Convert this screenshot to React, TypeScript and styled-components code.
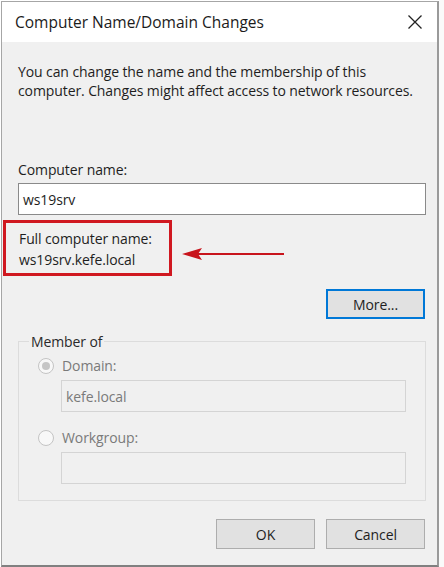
import React from 'react'
import styled, { createGlobalStyle } from 'styled-components';

const Global = createGlobalStyle`
body{
  margin:0;
  background:#ffffff;
  font-family: "Open Sans", "Noto Sans", sans-serif;
}
`;

const Screen = styled.div`
display:flex;
width:444px;
height:567px;
overflow:hidden;
`;

const Dialog = styled.div`
width:438px;
height:566px;
margin-left:1px;
margin-top:1px;
border:1px solid #a6a6a6;
border-bottom:2px solid #808080;
border-right:2px solid #9a9a9a;
background:#f0f0f0;
display:flex;
flex-direction:column;
box-sizing:border-box;
`;

const Behind = styled.div`
flex:1;
background:#fafafa;
`;

const TitleBar = styled.div`
height:40px;
background:#ffffff;
display:flex;
align-items:center;
justify-content:space-between;
padding:0 14px 0 13px;
`;

const Title = styled.span`
font-size:15.5px;
color:#1b1b1b;
letter-spacing:0px;
`;

const Body = styled.div`
padding:0 11px 0 16px;
display:flex;
flex-direction:column;
`;

const Text = styled.p<{ $gray?: boolean }>`
margin:0;
font-size:14px;
line-height:19px;
letter-spacing:-0.1px;
color:${p => (p.$gray ? '#7a7a7a' : '#1e1e1e')};
`;

const Description = styled(Text)`
margin-top:20px;
`;

const FieldLabel = styled(Text)`
margin-top:60px;
`;

const TextBox = styled.div<{ $disabled?: boolean }>`
height:32px;
box-sizing:border-box;
border:1px solid ${p => (p.$disabled ? '#d4d4d4' : '#8a8a8a')};
background:${p => (p.$disabled ? '#f0f0f0' : '#ffffff')};
display:flex;
align-items:center;
padding:0 4px;
font-size:14px;
letter-spacing:-0.1px;
color:${p => (p.$disabled ? '#7a7a7a' : '#1e1e1e')};
`;

const NameBox = styled(TextBox)`
margin-top:4px;
`;

const Annotated = styled.div`
display:flex;
align-items:center;
margin-left:-15px;
margin-top:5px;
`;

const RedFrame = styled.div`
width:169px;
height:56px;
box-sizing:border-box;
border:3px solid #d01820;
padding:6px 0 0 13px;
display:flex;
flex-direction:column;
gap:2px;
`;

const ArrowWrap = styled.svg`
margin-left:10px;
margin-top:12px;
`;

const Button = styled.button<{ $focused?: boolean }>`
width:99px;
height:30px;
box-sizing:border-box;
background:#e1e1e1;
border:${p => (p.$focused ? '2px solid #0078d7' : '1px solid #adadad')};
font-family:inherit;
font-size:14px;
letter-spacing:-0.1px;
color:#1e1e1e;
padding:0;
`;

const MoreRow = styled.div`
display:flex;
justify-content:flex-end;
margin-top:13px;
padding-right:1px;
`;

const Group = styled.fieldset`
margin:13px 0 0 0;
padding:0 19px 0 12px;
border:1px solid #dcdcdc;
height:169px;
box-sizing:border-box;
display:flex;
flex-direction:column;
`;

const Legend = styled.legend`
padding:0 2px;
margin-left:-2px;
font-size:14px;
letter-spacing:-0.1px;
color:#2a2a2a;
`;

const RadioRow = styled.div<{ $top: number }>`
display:flex;
align-items:center;
gap:8px;
padding-left:7px;
margin-top:${p => p.$top}px;
`;

const Radio = styled.span<{ $checked?: boolean }>`
width:16px;
height:16px;
border-radius:50%;
border:1px solid #c4c4c4;
background:#f8f8f8;
box-sizing:border-box;
display:flex;
align-items:center;
justify-content:center;
&::after{
  content:'';
  width:8px;
  height:8px;
  border-radius:50%;
  background:${p => (p.$checked ? '#c6c6c6' : 'transparent')};
}
`;

const GroupBox = styled(TextBox)`
margin:5px 0 0 30px;
height:32px;
`;

const Footer = styled.div`
display:flex;
justify-content:flex-end;
gap:11px;
margin-top:18px;
padding-right:1px;
`;

const CloseIcon = () => (
  <svg width="16" height="16" viewBox="0 0 16 16">
    <path d="M1.5 1.5 L14.5 14.5 M14.5 1.5 L1.5 14.5" stroke="#222" strokeWidth="1.3" fill="none" />
  </svg>
);

export default function App() {
  return (
    <Screen>
      <Global />
      <Dialog>
        <TitleBar>
          <Title>Computer Name/Domain Changes</Title>
          <CloseIcon />
        </TitleBar>
        <Body>
          <Description>
            You can change the name and the membership of this
            <br />
            computer. Changes might affect access to network resources.
          </Description>

          <FieldLabel>Computer name:</FieldLabel>
          <NameBox>ws19srv</NameBox>

          <Annotated>
            <RedFrame>
              <Text>Full computer name:</Text>
              <Text>ws19srv.kefe.local</Text>
            </RedFrame>
            <ArrowWrap width="104" height="14" viewBox="0 0 104 14">
              <path d="M3 7 H102" stroke="#c8141c" strokeWidth="2" />
              <path d="M0 7 L20 1 L16 7 L20 13 Z" fill="#c8141c" />
            </ArrowWrap>
          </Annotated>

          <MoreRow>
            <Button $focused>More...</Button>
          </MoreRow>

          <Group>
            <Legend>Member of</Legend>
            <RadioRow $top={5}>
              <Radio $checked />
              <Text $gray>Domain:</Text>
            </RadioRow>
            <GroupBox $disabled>kefe.local</GroupBox>
            <RadioRow $top={16}>
              <Radio />
              <Text $gray>Workgroup:</Text>
            </RadioRow>
            <GroupBox $disabled />
          </Group>

          <Footer>
            <Button>OK</Button>
            <Button>Cancel</Button>
          </Footer>
        </Body>
      </Dialog>
      <Behind />
    </Screen>
  );
}
